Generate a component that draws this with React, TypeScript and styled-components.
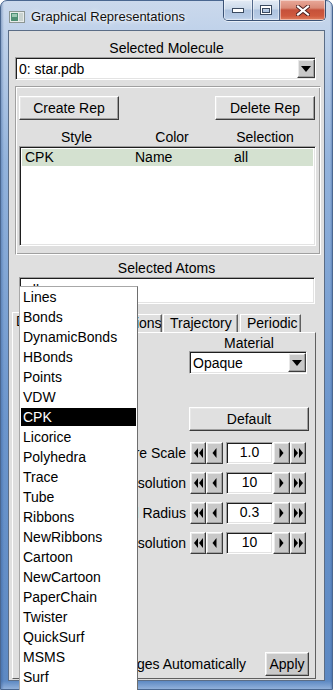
import React from "react";
import styled, { createGlobalStyle, css } from "styled-components";

const GlobalStyle = createGlobalStyle`
  html, body { margin: 0; padding: 0; width: 333px; height: 690px; overflow: hidden; background: #ffffff; }
  body { font-family: "Liberation Sans", Arial, sans-serif; font-size: 14px; color: #000; }
  * { box-sizing: border-box; }
`;

const raised = css`
  border: 1px solid;
  border-color: #ffffff #3c3c3c #3c3c3c #ffffff;
  box-shadow: inset -1px -1px 0 #a0a0a0, inset 1px 1px 0 #e8e8e8;
`;

const sunken = css`
  border: 1px solid;
  border-color: #a0a0a0 #ffffff #ffffff #a0a0a0;
  box-shadow: inset 1px 1px 0 #1e1e1e, inset -1px -1px 0 #e3e3e3;
`;

const Window = styled.div`
  position: relative;
  width: 333px;
  height: 690px;
  display: flex;
  flex-direction: column;
  border: 1px solid #4a6790;
  border-radius: 7px 7px 0 0;
  padding-bottom: 8px;
  background:
    linear-gradient(90deg, rgba(40, 80, 140, 0.35) 0px, rgba(255, 255, 255, 0) 3px, rgba(255, 255, 255, 0) 329px, rgba(40, 80, 140, 0.35) 331px),
    linear-gradient(180deg, #cbd9ec 0px, #c0d2ea 30px, #93b3dc 160px, #6b95cc 420px, #5d89c3 680px, #9fbbe0 690px);
`;

const TitleBar = styled.div`
  height: 29px;
  display: flex;
  align-items: flex-start;
  flex: none;
`;

const AppIcon = styled.svg`
  margin: 10px 0 0 8px;
  flex: none;
`;

const Title = styled.div`
  margin: 8px 0 0 6px;
  font-size: 13px;
  line-height: 15px;
  color: #111;
  text-shadow: 0 0 6px #ffffff, 0 0 3px #ffffff;
  flex: 1;
`;

const CaptionGroup = styled.div`
  display: flex;
  margin: -1px 6px 0 0;
  height: 21px;
  border: 1px solid #3b5275;
  border-top: none;
  border-radius: 0 0 5px 5px;
  overflow: hidden;
  box-shadow: 0 1px 0 rgba(255, 255, 255, 0.6);
`;

const CaptionButton = styled.div<{ $w: number; $close?: boolean }>`
  width: ${(p) => p.$w}px;
  height: 20px;
  display: flex;
  align-items: center;
  justify-content: center;
  border-left: ${(p) => (p.$close ? "1px solid #5a3a3a" : "none")};
  & + & { border-left: 1px solid #52688a; }
  background: ${(p) =>
    p.$close
      ? "linear-gradient(180deg, #e9a99a 0%, #d98a77 40%, #c6513a 50%, #cf5a3e 80%, #e08060 100%)"
      : "linear-gradient(180deg, #e3ebf5 0%, #cbd9ea 45%, #aec3df 50%, #b7cbe5 85%, #c9d9ee 100%)"};
  box-shadow: inset 0 0 0 1px rgba(255, 255, 255, 0.45);
`;

const Client = styled.div`
  flex: 1;
  margin: 0 7px;
  border: 1px solid #5b6d86;
  background: #dfdfdf;
  display: flex;
  flex-direction: column;
`;

const CenterLabel = styled.div<{ $mt: number }>`
  margin-top: ${(p) => p.$mt}px;
  height: 16px;
  line-height: 16px;
  text-align: center;
`;

const MenuButton = styled.div<{ $w?: number }>`
  ${sunken};
  background: #ffffff;
  height: 23px;
  display: flex;
  align-items: center;
  padding: 2px 0 2px 3px;
  ${(p) => (p.$w ? `width: ${p.$w}px;` : "")}
`;

const MolSelect = styled(MenuButton)`
  margin: 1px 8px 0 6px;
`;

const MenuText = styled.span`
  flex: 1;
  line-height: 16px;
  white-space: nowrap;
  overflow: hidden;
`;

const ArrowBox = styled.div`
  ${raised};
  width: 18px;
  height: 19px;
  background: #c8c8c8;
  display: flex;
  align-items: center;
  justify-content: center;
  flex: none;
`;

const GrooveFrame = styled.div`
  margin: 6px 3px 0 6px;
  border: 1px solid;
  border-color: #a0a0a0 #ffffff #ffffff #a0a0a0;
  box-shadow: inset 1px 1px 0 #ffffff, inset -1px -1px 0 #a0a0a0;
  padding: 9px 4px 8px 3px;
  display: flex;
  flex-direction: column;
`;

const ButtonRow = styled.div`
  display: flex;
  justify-content: space-between;
  padding-right: 1px;
`;

const PushButton = styled.div<{ $w: number; $h?: number; $dark?: boolean }>`
  ${raised};
  width: ${(p) => p.$w}px;
  height: ${(p) => p.$h ?? 24}px;
  background: ${(p) => (p.$dark ? "#c9c9c9" : "#e0e0e0")};
  display: flex;
  align-items: center;
  justify-content: center;
  line-height: 16px;
`;

const HeaderRow = styled.div`
  margin-top: 9px;
  height: 16px;
  line-height: 16px;
  display: grid;
  grid-template-columns: 115px 76px 110px;
  justify-items: center;
`;

const ListBox = styled.div`
  ${sunken};
  margin-top: 1px;
  height: 100px;
  background: #ffffff;
  padding: 2px;
`;

const ListRow = styled.div<{ $sel?: boolean }>`
  height: 17px;
  line-height: 17px;
  display: grid;
  grid-template-columns: 110px 99px 1fr;
  padding-left: 3px;
  background: ${(p) => (p.$sel ? "#d4e1d0" : "transparent")};
`;

const AtomsEntry = styled.div`
  ${sunken};
  margin: 1px 9px 0 10px;
  height: 27px;
  background: #ffffff;
  padding: 4px 5px;
  line-height: 16px;
`;

const Notebook = styled.div`
  flex: 1;
  margin: 8px 8px 1px 3px;
  display: flex;
  flex-direction: column;
`;

const TabRow = styled.div`
  height: 20px;
  display: flex;
  align-items: flex-end;
  position: relative;
  z-index: 1;
`;

const Tab = styled.div<{ $active?: boolean; $w: number; $gap?: number }>`
  width: ${(p) => p.$w}px;
  height: ${(p) => (p.$active ? 21 : 18)}px;
  margin-right: ${(p) => p.$gap ?? 1}px;
  margin-bottom: ${(p) => (p.$active ? -1 : 0)}px;
  border-top: 1px solid #ffffff;
  border-left: 1px solid #ffffff;
  border-right: 1px solid #5f5f5f;
  box-shadow: inset -1px 0 0 #a0a0a0;
  background: #dfdfdf;
  line-height: 17px;
  padding-left: ${(p) => (p.$active ? 3 : 6)}px;
  white-space: nowrap;
  overflow: hidden;
`;

const Pane = styled.div`
  flex: 1;
  border: 1px solid;
  border-color: #ffffff #5f5f5f #5f5f5f #ffffff;
  display: flex;
  flex-direction: column;
`;

const TopGrid = styled.div`
  display: grid;
  grid-template-columns: 120px 120px;
  grid-template-rows: 16px 23px 33px 24px;
  justify-content: space-between;
  padding: 2px 6px 0 6px;
`;

const GridLabel = styled.div<{ $end?: boolean }>`
  text-align: center;
  line-height: 16px;
  align-self: ${(p) => (p.$end ? "end" : "start")};
`;

const SpinList = styled.div`
  margin-top: 11px;
  display: flex;
  flex-direction: column;
  gap: 8px;
  padding-right: 9px;
`;

const SpinRow = styled.div`
  display: grid;
  grid-template-columns: 1fr auto;
  column-gap: 4px;
  align-items: center;
  height: 22px;
`;

const SpinLabel = styled.div`
  text-align: right;
  white-space: nowrap;
  line-height: 16px;
`;

const SpinControls = styled.div`
  display: flex;
  align-items: stretch;
  height: 22px;
`;

const SpinButton = styled.div<{ $w: number; $gapRight?: number }>`
  ${raised};
  width: ${(p) => p.$w}px;
  margin-right: ${(p) => p.$gapRight ?? 0}px;
  background: #c8c8c8;
  display: flex;
  align-items: center;
  justify-content: center;
`;

const SpinEntry = styled.div`
  ${sunken};
  width: 47px;
  background: #ffffff;
  text-align: center;
  line-height: 19px;
`;

const BottomRow = styled.div`
  margin-top: auto;
  display: flex;
  align-items: center;
  justify-content: flex-end;
  padding: 0 6px 2px 0;
`;

const CheckLabel = styled.div`
  display: flex;
  align-items: center;
  gap: 5px;
  margin-right: 19px;
  white-space: nowrap;
`;

const CheckBox = styled.div`
  ${sunken};
  width: 13px;
  height: 13px;
  background: #ffffff;
`;

const PopupMenu = styled.div`
  position: absolute;
  left: 18px;
  top: 285px;
  width: 119px;
  height: 420px;
  background: #ffffff;
  border: 1px solid;
  border-color: #a8a8a8 #6e6e6e #6e6e6e #a8a8a8;
  padding: 0 1px;
  z-index: 5;
`;

const MenuItem = styled.div<{ $sel?: boolean }>`
  height: 20px;
  border-top: 1px solid #ffffff;
  border-bottom: 1px solid #ffffff;
  line-height: 18px;
  padding-left: 2px;
  white-space: nowrap;
  background: ${(p) => (p.$sel ? "#000000" : "transparent")};
  color: ${(p) => (p.$sel ? "#ffffff" : "#000000")};
`;

const DownTriangle = () => (
  <svg width="10" height="6" viewBox="0 0 10 6">
    <polygon points="0,0 10,0 5,6" fill="#000" />
  </svg>
);

const Arrow = ({ dir, double }: { dir: "l" | "r"; double?: boolean }) => {
  const tri = (x: number) =>
    dir === "l" ? `${x},5 ${x + 4},0 ${x + 4},10` : `${x + 4},5 ${x},0 ${x},10`;
  return (
    <svg width={double ? 9 : 5} height="10" viewBox={`0 0 ${double ? 9 : 5} 10`}>
      {double ? (
        <>
          <polygon points={tri(0)} fill="#000" />
          <polygon points={tri(5)} fill="#000" />
        </>
      ) : (
        <polygon points={tri(0.5)} fill="#000" />
      )}
    </svg>
  );
};

const Spinner = ({ label, value }: { label: string; value: string }) => (
  <SpinRow>
    <SpinLabel>{label}</SpinLabel>
    <SpinControls>
      <SpinButton $w={16}>
        <Arrow dir="l" double />
      </SpinButton>
      <SpinButton $w={17} $gapRight={3}>
        <Arrow dir="l" />
      </SpinButton>
      <SpinEntry>{value}</SpinEntry>
      <SpinButton $w={17}>
        <Arrow dir="r" />
      </SpinButton>
      <SpinButton $w={16}>
        <Arrow dir="r" double />
      </SpinButton>
    </SpinControls>
  </SpinRow>
);

const styles = [
  "Lines", "Bonds", "DynamicBonds", "HBonds", "Points", "VDW", "CPK", "Licorice",
  "Polyhedra", "Trace", "Tube", "Ribbons", "NewRibbons", "Cartoon", "NewCartoon",
  "PaperChain", "Twister", "QuickSurf", "MSMS", "Surf",
];

export default function App() {
  return (
    <>
      <GlobalStyle />
      <Window>
        <TitleBar>
          <AppIcon width="16" height="12" viewBox="0 0 16 12">
            <rect x="0.5" y="0.5" width="15" height="11" fill="#e8ecea" stroke="#8b9592" />
            <rect x="2" y="2" width="7" height="8" fill="#4f8f74" />
            <rect x="3" y="3" width="5" height="3" fill="#9cc8b3" />
            <rect x="10" y="2" width="4" height="8" fill="#c9d3d0" />
          </AppIcon>
          <Title>Graphical Representations</Title>
          <CaptionGroup>
            <CaptionButton $w={28}>
              <svg width="12" height="6" viewBox="0 0 12 6">
                <rect x="0.5" y="1.5" width="11" height="4" fill="#fff" stroke="#3a4a60" />
              </svg>
            </CaptionButton>
            <CaptionButton $w={27}>
              <svg width="12" height="10" viewBox="0 0 12 10">
                <rect x="0.5" y="0.5" width="11" height="9" fill="none" stroke="#3a4a60" />
                <rect x="2.5" y="3.5" width="7" height="4" fill="none" stroke="#3a4a60" />
                <rect x="1.5" y="1.5" width="9" height="7" fill="none" stroke="#fff" />
                <line x1="2" y1="2.5" x2="10" y2="2.5" stroke="#fff" />
              </svg>
            </CaptionButton>
            <CaptionButton $w={46} $close>
              <svg width="14" height="11" viewBox="0 0 14 11">
                <path d="M2 1.5 L12 9.5 M12 1.5 L2 9.5" stroke="#4a2020" strokeWidth="4" strokeLinecap="square" />
                <path d="M2 1.5 L12 9.5 M12 1.5 L2 9.5" stroke="#ffffff" strokeWidth="2.2" strokeLinecap="square" />
              </svg>
            </CaptionButton>
          </CaptionGroup>
        </TitleBar>

        <Client>
          <CenterLabel $mt={9}>Selected Molecule</CenterLabel>
          <MolSelect>
            <MenuText>0: star.pdb</MenuText>
            <ArrowBox>
              <DownTriangle />
            </ArrowBox>
          </MolSelect>

          <GrooveFrame>
            <ButtonRow>
              <PushButton $w={100}>Create Rep</PushButton>
              <PushButton $w={100}>Delete Rep</PushButton>
            </ButtonRow>
            <HeaderRow>
              <span>Style</span>
              <span>Color</span>
              <span>Selection</span>
            </HeaderRow>
            <ListBox>
              <ListRow $sel>
                <span>CPK</span>
                <span>Name</span>
                <span>all</span>
              </ListRow>
            </ListBox>
          </GrooveFrame>

          <CenterLabel $mt={5}>Selected Atoms</CenterLabel>
          <AtomsEntry>all</AtomsEntry>

          <Notebook>
            <TabRow>
              <Tab $active $w={78} $gap={0}>Draw style</Tab>
              <Tab $w={72}>Selections</Tab>
              <Tab $w={75} $gap={2}>Trajectory</Tab>
              <Tab $w={61}>Periodic</Tab>
            </TabRow>
            <Pane>
              <TopGrid>
                <GridLabel>Coloring Method</GridLabel>
                <GridLabel>Material</GridLabel>
                <MenuButton $w={118}>
                  <MenuText>Name</MenuText>
                  <ArrowBox>
                    <DownTriangle />
                  </ArrowBox>
                </MenuButton>
                <MenuButton $w={118}>
                  <MenuText>Opaque</MenuText>
                  <ArrowBox>
                    <DownTriangle />
                  </ArrowBox>
                </MenuButton>
                <GridLabel $end>Drawing Method</GridLabel>
                <div />
                <MenuButton $w={118}>
                  <MenuText>CPK</MenuText>
                  <ArrowBox>
                    <DownTriangle />
                  </ArrowBox>
                </MenuButton>
                <PushButton $w={120}>Default</PushButton>
              </TopGrid>

              <SpinList>
                <Spinner label="Sphere Scale" value="1.0" />
                <Spinner label="Sphere Resolution" value="10" />
                <Spinner label="Bond Radius" value="0.3" />
                <Spinner label="Bond Resolution" value="10" />
              </SpinList>

              <BottomRow>
                <CheckLabel>
                  <CheckBox />
                  <span>Apply Changes Automatically</span>
                </CheckLabel>
                <PushButton $w={44} $dark>Apply</PushButton>
              </BottomRow>
            </Pane>
          </Notebook>
        </Client>

        <PopupMenu>
          {styles.map((s) => (
            <MenuItem key={s} $sel={s === "CPK"}>
              {s}
            </MenuItem>
          ))}
        </PopupMenu>
      </Window>
    </>
  );
}
